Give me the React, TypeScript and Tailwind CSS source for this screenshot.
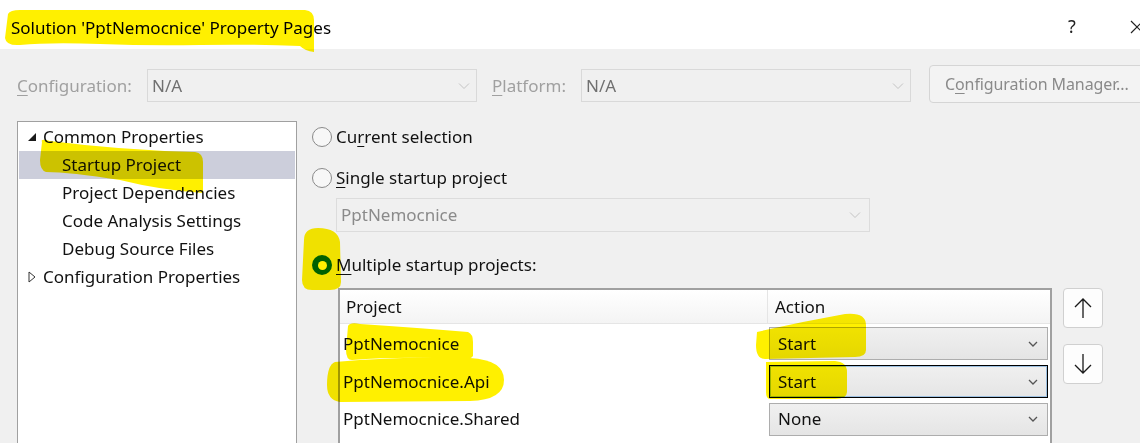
import React from "react";

const font = { fontFamily: '"Noto Sans", "Open Sans", sans-serif' };

function Chevron({ className = "", small }: { className?: string; small?: boolean }) {
  if (small) {
    return (
      <svg width="10" height="6" viewBox="0 0 10 6" className={className}>
        <path d="M1 1 L5 5 L9 1" fill="none" stroke="currentColor" strokeWidth="1.3" />
      </svg>
    );
  }
  return (
    <svg width="12" height="8" viewBox="0 0 12 8" className={className}>
      <path d="M1 1.5 L6 6.5 L11 1.5" fill="none" stroke="currentColor" strokeWidth="1" />
    </svg>
  );
}

function Radio({ checked }: { checked?: boolean }) {
  if (checked) {
    return (
      <span className="w-[20px] h-[20px] rounded-full bg-[#0067c0] flex items-center justify-center shrink-0">
        <span className="w-[9px] h-[9px] rounded-full bg-white" />
      </span>
    );
  }
  return <span className="w-[20px] h-[20px] rounded-full border border-[#8a8a8a] bg-[#f7f7f7] shrink-0" />;
}

function CellSelect({ label, focused }: { label: string; focused?: boolean }) {
  return (
    <div
      className={
        "h-[33px] ml-[1px] mr-[2px] flex items-center justify-between pl-[8px] pr-[9px] bg-gradient-to-b from-[#f0f0f0] to-[#e5e5e5] " +
        (focused ? "border border-black shadow-[inset_0_0_0_1px_#9dc0e0]" : "border border-[#adadad]")
      }
    >
      <span className="text-[17px] text-[#111]">{label}</span>
      <Chevron small className="text-[#555]" />
    </div>
  );
}

export default function App() {
  const tree = [
    { label: "Common Properties", level: 0, arrow: "down" },
    { label: "Startup Project", level: 1, selected: true },
    { label: "Project Dependencies", level: 1 },
    { label: "Code Analysis Settings", level: 1 },
    { label: "Debug Source Files", level: 1 },
    { label: "Configuration Properties", level: 0, arrow: "right" },
  ];
  const rows = [
    { name: "PptNemocnice", action: "Start", h: "h-[39px]" },
    { name: "PptNemocnice.Api", action: "Start", focused: true, h: "h-[37px]" },
    { name: "PptNemocnice.Shared", action: "None", h: "h-[38px]" },
  ];
  return (
    <div className="relative w-[1140px] h-[443px] overflow-hidden bg-[#f0f0f0] text-[#1a1a1a]" style={font}>
      {/* Title bar */}
      <div className="h-[49px] bg-white flex items-center relative">
        <span className="pl-[11px] pt-[6px] text-[17px] text-black whitespace-nowrap">Solution 'PptNemocnice' Property Pages</span>
        <span className="absolute left-[1068px] top-[13px] text-[18px] text-[#222]">?</span>
        <svg className="absolute left-[1130px] top-[20px]" width="14" height="14" viewBox="0 0 14 14">
          <path d="M1 1 L13 13 M13 1 L1 13" stroke="#222" strokeWidth="1.2" />
        </svg>
      </div>

      {/* Config row */}
      <div className="h-[72px] flex items-start pt-[20px] text-[17px]">
        <span className="shrink-0 pl-[17px] w-[147px] h-[33px] flex items-center text-[#a0a0a0]">
          <span className="underline underline-offset-[3px]">C</span>onfiguration:
        </span>
        <div className="shrink-0 w-[330px] h-[33px] border border-[#d9d9d9] flex items-center justify-between pl-[4px] pr-[6px]">
          <span className="text-[#707070]">N/A</span>
          <Chevron className="text-[#c4c4c4]" />
        </div>
        <span className="shrink-0 ml-[15px] w-[89px] h-[33px] flex items-center text-[#a0a0a0]">
          <span className="underline underline-offset-[3px]">P</span>latform:
        </span>
        <div className="shrink-0 w-[330px] h-[33px] border border-[#d9d9d9] flex items-center justify-between pl-[4px] pr-[6px]">
          <span className="text-[#707070]">N/A</span>
          <Chevron className="text-[#c4c4c4]" />
        </div>
        <div className="shrink-0 ml-[18px] -mt-[4px] w-[240px] h-[38px] border border-[#d5d5d5] rounded-[4px] bg-[#f3f3f3] flex items-center pl-[15px] text-[16px] tracking-[-0.1px] text-[#8a8a8a] whitespace-nowrap">
          C<span className="underline underline-offset-[3px]">o</span>nfiguration Manager...
        </div>
      </div>

      {/* Main */}
      <div className="flex items-start">
        {/* Tree */}
        <div className="shrink-0 ml-[17px] w-[280px] h-[330px] border border-[#a0a0a0] bg-white pt-[1px] px-[1px]">
          {tree.map((t) => (
            <div
              key={t.label}
              className={"h-[28px] flex items-center text-[17px] text-[#111] whitespace-nowrap " + (t.selected ? "bg-[#cccedb]" : "")}
            >
              {t.level === 0 ? (
                <>
                  <span className="w-[24px] pl-[8px] flex items-center">
                    {t.arrow === "down" ? (
                      <svg width="10" height="10" viewBox="0 0 10 10">
                        <path d="M9 1 L9 9 L1 9 Z" fill="#1a1a1a" />
                      </svg>
                    ) : (
                      <svg width="10" height="12" viewBox="0 0 10 12">
                        <path d="M2 1 L8 6 L2 11 Z" fill="none" stroke="#333" strokeWidth="1" />
                      </svg>
                    )}
                  </span>
                  <span>{t.label}</span>
                </>
              ) : (
                <span className="pl-[43px]">{t.label}</span>
              )}
            </div>
          ))}
        </div>

        {/* Right panel */}
        <div className="ml-[15px] flex flex-col text-[17px] text-[#111]">
          <div className="h-[32px] flex items-center gap-[4px]">
            <Radio />
            <span>
              Cu<span className="underline underline-offset-[3px]">r</span>rent selection
            </span>
          </div>
          <div className="mt-[9px] h-[32px] flex items-center gap-[4px]">
            <Radio />
            <span>
              <span className="underline underline-offset-[3px]">S</span>ingle startup project
            </span>
          </div>
          <div className="mt-[4px] ml-[24px] w-[534px] h-[34px] border border-[#dcdcdc] flex items-center justify-between pl-[4px] pr-[8px]">
            <span className="text-[#8a8a8a]">PptNemocnice</span>
            <Chevron className="text-[#c4c4c4]" />
          </div>
          <div className="mt-[17px] h-[32px] flex items-center gap-[4px]">
            <Radio checked />
            <span>
              <span className="underline underline-offset-[3px]">M</span>ultiple startup projects:
            </span>
          </div>
          <div className="mt-[7px] flex items-start">
            {/* Table */}
            <div className="shrink-0 ml-[26px] w-[714px] h-[160px] border-2 border-[#a0a0a0] bg-white">
              <div className="h-[34px] flex bg-gradient-to-b from-white to-[#f4f4f4] border-b border-[#e5e5e5]">
                <div className="w-[428px] pl-[6px] flex items-center border-r border-[#e5e5e5]">Project</div>
                <div className="flex-1 pl-[7px] flex items-center">Action</div>
              </div>
              {rows.map((r) => (
                <div key={r.name} className={"flex items-center " + r.h}>
                  <div className="w-[428px] pl-[3px]">{r.name}</div>
                  <div className="flex-1">
                    <CellSelect label={r.action} focused={r.focused} />
                  </div>
                </div>
              ))}
            </div>
            {/* Up/Down */}
            <div className="shrink-0 ml-[11px] flex flex-col gap-[16px]">
              <div className="w-[40px] h-[40px] rounded-[4px] border border-[#d0d0d0] bg-[#fdfdfd] flex items-center justify-center">
                <svg width="20" height="22" viewBox="0 0 20 22">
                  <path d="M10 21 L10 2 M2 10 L10 2 L18 10" fill="none" stroke="#1a1a1a" strokeWidth="1.3" />
                </svg>
              </div>
              <div className="w-[40px] h-[40px] rounded-[4px] border border-[#d0d0d0] bg-[#fdfdfd] flex items-center justify-center">
                <svg width="20" height="22" viewBox="0 0 20 22">
                  <path d="M10 1 L10 20 M2 12 L10 20 L18 12" fill="none" stroke="#1a1a1a" strokeWidth="1.3" />
                </svg>
              </div>
            </div>
          </div>
        </div>
      </div>

      {/* Highlighter marks */}
      <svg className="absolute inset-0 pointer-events-none mix-blend-multiply" width="1140" height="443" viewBox="0 0 1140 443">
        <g fill="#fff000">
          <path d="M8,14 Q10,10 20,10 L305,10 Q314,11 314,20 L314,52 Q305,51 300,46 Q250,44 200,45 Q150,46 100,44 Q50,42 20,45 Q6,46 5,38 Z" />
          <path d="M42,142 Q40,138 50,141 Q120,150 195,152 Q203,153 203,162 L203,193 Q160,190 120,180 Q70,172 46,172 Q40,170 40,160 Z" />
          <path d="M304,240 Q304,228 318,228 Q338,228 340,242 L341,282 Q341,290 330,290 L312,290 Q302,290 302,280 Z" />
          <path d="M348,326 Q350,322 360,324 Q420,328 468,332 Q473,334 473,342 L473,356 Q470,360 460,359 Q400,356 352,360 Q346,360 346,350 Z" />
          <path d="M335,362 Q400,356 470,358 Q504,360 504,380 Q504,400 470,401 L340,402 Q327,400 327,385 Q327,365 335,362 Z" />
          <path d="M757,332 Q800,322 845,314 Q866,312 866,325 L866,350 Q866,357 855,357 Q810,358 765,359 Q756,359 756,345 Z" />
          <path d="M766,362 L835,361 Q847,362 847,372 L847,392 Q847,399 835,399 L770,399 Q766,399 766,392 Z" />
        </g>
      </svg>
    </div>
  );
}
